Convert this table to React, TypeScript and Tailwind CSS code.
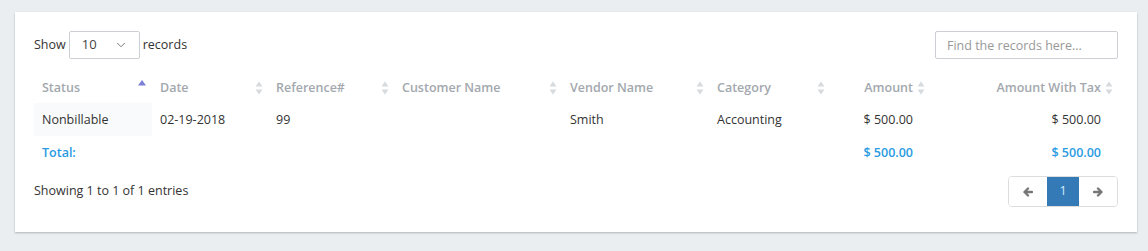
import { ChevronDown } from "lucide-react";

type Col = {
  key: string;
  label: string;
  width: string;
  align?: "right";
  sort?: "asc" | "none";
};

const cols: Col[] = [
  { key: "status", label: "Status", width: "w-[118px]", sort: "asc" },
  { key: "date", label: "Date", width: "w-[116px]" },
  { key: "ref", label: "Reference#", width: "w-[126px]" },
  { key: "customer", label: "Customer Name", width: "w-[168px]" },
  { key: "vendor", label: "Vendor Name", width: "w-[147px]" },
  { key: "category", label: "Category", width: "w-[121px]" },
  { key: "amount", label: "Amount", width: "w-[100px]", align: "right" },
  { key: "amountTax", label: "Amount With Tax", width: "w-[188px]", align: "right" },
];

const rows: Record<string, string>[] = [
  {
    status: "Nonbillable",
    date: "02-19-2018",
    ref: "99",
    customer: "",
    vendor: "Smith",
    category: "Accounting",
    amount: "$ 500.00",
    amountTax: "$ 500.00",
  },
];

function SortIcon({ dir }: { dir?: "asc" | "none" }) {
  if (dir === "asc") {
    return (
      <svg width="8" height="12" viewBox="0 0 8 12" className="absolute right-[6px] top-[7px]">
        <path d="M4 1 L8 6.5 L0 6.5 Z" fill="#7a7fd8" />
      </svg>
    );
  }
  return (
    <svg width="8" height="14" viewBox="0 0 8 14" className="absolute right-[5px] top-[9px]">
      <path d="M4 0.5 L7.5 5.5 L0.5 5.5 Z" fill="#d8dbde" />
      <path d="M4 13.5 L7.5 8.5 L0.5 8.5 Z" fill="#d8dbde" />
    </svg>
  );
}

function Arrow({ left }: { left?: boolean }) {
  return (
    <svg width="10" height="10" viewBox="0 0 10 10" className={left ? "" : "rotate-180"}>
      <path
        d="M9 5 H2 M5 1.5 L1.5 5 L5 8.5"
        stroke="#777"
        strokeWidth="2.4"
        fill="none"
        strokeLinecap="round"
        strokeLinejoin="round"
      />
    </svg>
  );
}

export default function App() {
  return (
    <div
      className="min-h-[251px] bg-[#ebeef0] pl-[15px] pr-[11px] pt-[12px]"
      style={{ fontFamily: '"Open Sans", "Liberation Sans", sans-serif' }}
    >
      <div className="bg-white px-[19px] pb-[25px] pt-[19px] shadow-[0_1px_2px_rgba(0,0,0,0.25)]">
        <div className="flex items-center justify-between">
          <div className="flex items-center gap-[3px] text-[12.5px] text-[#333]">
            <span>Show</span>
            <div className="flex h-[28px] w-[71px] items-center justify-between rounded-[2px] border border-[#ccd0d4] pl-[12px] pr-[11px] text-[13px] text-[#444]">
              <span>10</span>
              <ChevronDown size={14} strokeWidth={1.5} color="#666" />
            </div>
            <span>records</span>
          </div>
          <input
            type="text"
            placeholder="Find the records here..."
            className="h-[28px] w-[183px] rounded-[2px] border border-[#ccd0d4] px-[11px] text-[12.5px] text-[#333] outline-none placeholder:text-[#999]"
          />
        </div>

        <div className="mt-[13px]">
          <div className="flex h-[31px] items-center">
            {cols.map((c) => (
              <div
                key={c.key}
                className={`relative ${c.width} h-full shrink-0 pl-[8px] pr-[17px] text-[12.5px] font-semibold leading-[31px] text-[#a3a8ae] ${
                  c.align === "right" ? "text-right" : ""
                }`}
              >
                {c.label}
                <SortIcon dir={c.sort} />
              </div>
            ))}
          </div>

          {rows.map((r, i) => (
            <div key={i} className="flex h-[33px] items-center">
              {cols.map((c) => (
                <div
                  key={c.key}
                  className={`${c.width} h-full shrink-0 pl-[8px] pr-[17px] text-[12.5px] leading-[33px] text-[#333] ${
                    c.align === "right" ? "text-right" : ""
                  } ${c.key === "status" ? "bg-[#f9fafc]" : ""}`}
                >
                  {r[c.key]}
                </div>
              ))}
            </div>
          ))}

          <div className="flex h-[34px] items-center text-[12.5px] font-semibold text-[#2a9be2]">
            {cols.map((c) => (
              <div
                key={c.key}
                className={`${c.width} shrink-0 pl-[8px] pr-[17px] ${
                  c.align === "right" ? "text-right" : ""
                }`}
              >
                {c.key === "status" ? "Total:" : c.align === "right" ? "$ 500.00" : ""}
              </div>
            ))}
          </div>
        </div>

        <div className="mt-[6px] flex items-center justify-between">
          <span className="text-[12.5px] text-[#333]">Showing 1 to 1 of 1 entries</span>
          <div className="flex h-[31px] overflow-hidden rounded-[4px] border border-[#dddddd]">
            <button className="flex w-[38px] items-center justify-center bg-white">
              <Arrow left />
            </button>
            <button className="flex w-[32px] items-center justify-center bg-[#337ab7] text-[12.5px] text-[#d5ecff]">
              1
            </button>
            <button className="flex w-[38px] items-center justify-center bg-white">
              <Arrow />
            </button>
          </div>
        </div>
      </div>
    </div>
  );
}
